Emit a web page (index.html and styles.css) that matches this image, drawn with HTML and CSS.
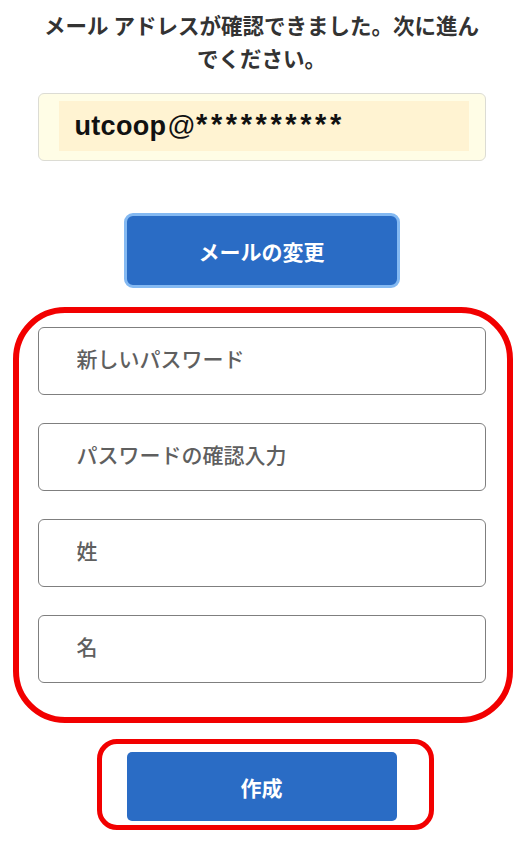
FILE: index.html
```html
<!DOCTYPE html>
<html lang="ja">
<head>
  <meta charset="UTF-8">
  <title>アカウント作成</title>
  <meta name="viewport" content="width=device-width, initial-scale=1">
  <link rel="stylesheet" href="styles.css">
</head>
<body>

<div class="page">
  <p class="message">メール アドレスが確認できました。次に進ん<br>でください。</p>

  <div class="email-box">
    <div class="email-value">utcoop<span class="at">@</span><span class="mask">**********</span></div>
  </div>

  <button class="btn btn-change">メールの変更</button>

  <div class="frame form-frame">
    <input type="password" class="field" placeholder="新しいパスワード">
    <input type="password" class="field" placeholder="パスワードの確認入力">
    <input type="text" class="field" placeholder="姓">
    <input type="text" class="field" placeholder="名">
  </div>

  <div class="frame submit-frame">
    <button class="btn btn-create">作成</button>
  </div>
</div>

</body>
</html>
```

FILE: styles.css
```css
body {
  margin: 0;
  background: #fff;
  font-family: "Noto Sans CJK JP", "Liberation Sans", sans-serif;
  color: #333;
}
.page {
  width: 525px;
  display: flex;
  flex-direction: column;
  align-items: center;
}
.message {
  margin: 8px 0 0;
  width: 448px;
  text-align: center;
  font-size: 21.5px;
  line-height: 33px;
  font-weight: bold;
  color: #333;
  margin-left: -2px;
}
.email-box {
  margin-top: 19px;
  margin-left: -2px;
  width: 448px;
  height: 68px;
  box-sizing: border-box;
  padding: 7px 16px 9px 20px;
  background: #fffde6;
  border: 1.5px solid #dcdcd4;
  border-radius: 6px;
}
.email-value {
  height: 50px;
  background: #fff3d2;
  padding-left: 16px;
  display: flex;
  align-items: center;
  font-family: "Liberation Sans", sans-serif;
  font-size: 27px;
  font-weight: bold;
  color: #111;
  letter-spacing: 0.3px;
}
.at {
  font-weight: normal;
  font-size: 28px;
  margin-left: 1px;
}
.mask {
  font-size: 29px;
  letter-spacing: 3.6px;
  margin-top: -4px;
}
.btn {
  font-family: "Noto Sans CJK JP", sans-serif;
  font-weight: bold;
  font-size: 21px;
  color: #fff;
  background: #2a6cc5;
  border: none;
  cursor: pointer;
}
.btn-change {
  margin-top: 52px;
  margin-left: -2px;
  width: 276px;
  height: 75px;
  border: 3px solid #84b9f2;
  border-radius: 9px;
}
.frame {
  border: 6px solid #f20000;
  box-sizing: border-box;
}
.form-frame {
  margin-top: 19px;
  width: 500px;
  border-radius: 52px;
  padding: 14px 21px 34px 19px;
  display: flex;
  flex-direction: column;
  gap: 28px;
}
.field {
  height: 68px;
  box-sizing: border-box;
  border: 1.5px solid #7f7f7f;
  border-radius: 6px;
  padding: 0 0 6px 38px;
  font-family: "Noto Sans CJK JP", sans-serif;
  font-size: 21px;
  font-weight: 500;
  background: #fff;
}
.field::placeholder {
  color: #5f5f5f;
}
.submit-frame {
  margin-top: 16px;
  margin-left: 5px;
  width: 337px;
  height: 91px;
  border-width: 5px;
  border-radius: 20px;
  padding: 8px 32px 4px 25px;
}
.btn-create {
  width: 270px;
  height: 69px;
  border-radius: 5px;
}
```
